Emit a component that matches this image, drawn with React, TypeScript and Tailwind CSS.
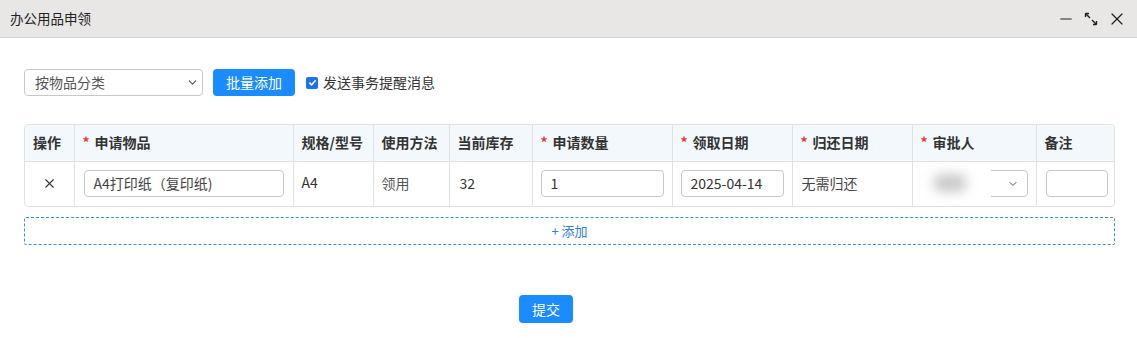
import { ChevronDown, Minus, X } from "lucide-react";

const FONT = { fontFamily: '"Noto Sans CJK SC", "Noto Sans", sans-serif' };

type Col = { key: string; label: string; width: number; required?: boolean };

const COLS: Col[] = [
  { key: "op", label: "操作", width: 49 },
  { key: "item", label: "申请物品", width: 219, required: true },
  { key: "spec", label: "规格/型号", width: 80 },
  { key: "usage", label: "使用方法", width: 76 },
  { key: "stock", label: "当前库存", width: 83 },
  { key: "qty", label: "申请数量", width: 140, required: true },
  { key: "date", label: "领取日期", width: 120, required: true },
  { key: "ret", label: "归还日期", width: 120, required: true },
  { key: "approver", label: "审批人", width: 124, required: true },
  { key: "note", label: "备注", width: 80 },
];

function ExpandIcon() {
  return (
    <svg width="16" height="16" viewBox="0 0 16 16" fill="none" stroke="#222" strokeWidth="1.4">
      <path d="M2.5 2.5 L7 7" />
      <path d="M2.5 2.5 H6 M2.5 2.5 V6" />
      <path d="M13.5 13.5 L9 9" />
      <path d="M13.5 13.5 H10 M13.5 13.5 V10" />
    </svg>
  );
}

function TextBox({ value, className }: { value: string; className: string }) {
  return (
    <div
      className={`flex h-[27px] items-center rounded-[4px] border border-[#c8c8c8] px-[9px] text-[14px] text-[#333] ${className}`}
    >
      {value}
    </div>
  );
}

export default function App() {
  return (
    <div className="h-[338px] w-[1137px] bg-white" style={FONT}>
      <div className="flex h-[38px] items-center justify-between border-b border-[#d6d6d6] bg-[#e8e7e6] pl-[10px] pr-[10px]">
        <span className="text-[13.5px] text-[#222]">办公用品申领</span>
        <div className="flex items-center gap-[8px]">
          <Minus className="h-[18px] w-[18px] text-[#222]" strokeWidth={1.5} />
          <ExpandIcon />
          <X className="h-[20px] w-[20px] text-[#222]" strokeWidth={1.5} />
        </div>
      </div>

      <div className="pl-[24px] pr-[22px] pt-[31px]">
        <div className="flex items-center">
          <div className="flex h-[27px] w-[179px] items-center justify-between rounded-[4px] border border-[#c8c8c8] pl-[10px] pr-[3px] text-[14px] text-[#555]">
            <span>按物品分类</span>
            <ChevronDown className="h-[13px] w-[13px] text-[#555]" strokeWidth={2} />
          </div>
          <button className="ml-[10px] h-[27px] w-[82px] rounded-[4px] bg-[#1a8cff] text-[14px] text-white">
            批量添加
          </button>
          <label className="ml-[11px] flex items-center gap-[5px] text-[14px] text-[#333]">
            <span className="flex h-[12px] w-[12px] items-center justify-center rounded-[2px] bg-[#1a73e8]">
              <svg width="9" height="9" viewBox="0 0 10 10" fill="none" stroke="white" strokeWidth="1.8">
                <path d="M1.5 5.2 L4 7.5 L8.5 2.5" />
              </svg>
            </span>
            发送事务提醒消息
          </label>
        </div>

        <div className="mt-[28px] overflow-hidden rounded-[4px] border border-[#e2e2e2]">
          <table className="w-full table-fixed border-collapse text-[14px]">
            <colgroup>
              {COLS.map((c) => (
                <col key={c.key} style={{ width: c.width }} />
              ))}
            </colgroup>
            <thead>
              <tr className="h-[36px] bg-[#f3f8fd]">
                {COLS.map((c, i) => (
                  <th
                    key={c.key}
                    className={`px-[8px] text-left font-bold text-[#333] ${i > 0 ? "border-l border-[#e2e2e2]" : ""}`}
                  >
                    {c.required && <span className="mr-[5px] text-[#e53935]">*</span>}
                    {c.label}
                  </th>
                ))}
              </tr>
            </thead>
            <tbody>
              <tr className="h-[45px] border-t border-[#e2e2e2] text-[14px] text-[#333]">
                <td className="text-center">
                  <X className="mx-auto h-[15px] w-[15px] text-[#333]" strokeWidth={1.8} />
                </td>
                <td className="border-l border-[#e2e2e2] px-[9px]">
                  <TextBox value="A4打印纸（复印纸)" className="w-[200px] text-[#444]" />
                </td>
                <td className="border-l border-[#e2e2e2] px-[8px] pb-[3px]">A4</td>
                <td className="border-l border-[#e2e2e2] px-[8px] text-[#555]">领用</td>
                <td className="border-l border-[#e2e2e2] px-[10px]">32</td>
                <td className="border-l border-[#e2e2e2] px-[8px]">
                  <TextBox value="1" className="w-[123px]" />
                </td>
                <td className="border-l border-[#e2e2e2] px-[8px]">
                  <TextBox value="2025-04-14" className="w-[103px] px-[6px]" />
                </td>
                <td className="border-l border-[#e2e2e2] px-[9px] text-[#444]">无需归还</td>
                <td className="border-l border-[#e2e2e2] pl-[2px] pr-[8px]">
                  <div className="relative flex h-[27px] w-[113px] items-center justify-end rounded-[4px] border border-[#c8c8c8] pr-[8px]">
                    <ChevronDown className="h-[12px] w-[12px] text-[#555]" strokeWidth={2} />
                    <div className="absolute left-[-1px] top-[-5px] h-[33px] w-[76px] bg-white">
                      <div className="ml-[18px] mt-[8px] h-[18px] w-[34px] rounded-full bg-[#c9c9c9] blur-[6px]" />
                    </div>
                  </div>
                </td>
                <td className="border-l border-[#e2e2e2] px-[9px]">
                  <TextBox value="" className="w-[62px]" />
                </td>
              </tr>
            </tbody>
          </table>
        </div>

        <button className="mt-[10px] flex h-[28px] w-full items-center justify-center rounded-[2px] border border-dashed border-[#3d8fd6] text-[13px] text-[#2f7fd0]">
          + 添加
        </button>

        <div className="mt-[50px] flex">
          <button className="ml-[495px] h-[28px] w-[54px] rounded-[4px] bg-[#1a8cff] text-[14px] text-white">
            提交
          </button>
        </div>
      </div>
    </div>
  );
}
